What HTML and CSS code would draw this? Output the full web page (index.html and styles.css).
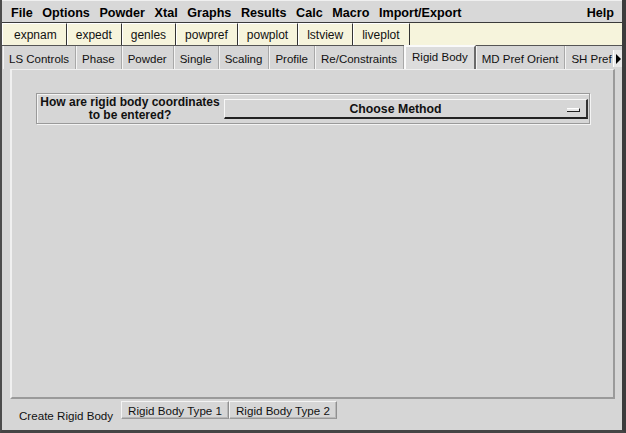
FILE: index.html
```html
<!DOCTYPE html>
<html>
<head>
<meta charset="utf-8">
<link rel="stylesheet" href="styles.css">
</head>
<body>
<div class="window">
  <div class="menubar">
    <span class="mi">File</span>
    <span class="mi">Options</span>
    <span class="mi">Powder</span>
    <span class="mi">Xtal</span>
    <span class="mi">Graphs</span>
    <span class="mi">Results</span>
    <span class="mi">Calc</span>
    <span class="mi">Macro</span>
    <span class="mi">Import/Export</span>
    <span class="mi help">Help</span>
  </div>
  <div class="toolbar">
    <span class="tb">expnam</span>
    <span class="tb">expedt</span>
    <span class="tb">genles</span>
    <span class="tb">powpref</span>
    <span class="tb">powplot</span>
    <span class="tb">lstview</span>
    <span class="tb">liveplot</span>
  </div>
  <div class="tabs">
    <span class="tab">LS Controls</span>
    <span class="tab">Phase</span>
    <span class="tab">Powder</span>
    <span class="tab">Single</span>
    <span class="tab">Scaling</span>
    <span class="tab">Profile</span>
    <span class="tab">Re/Constraints</span>
    <span class="tab active">Rigid Body</span>
    <span class="tab">MD Pref Orient</span>
    <span class="tab last">SH Pref</span>
    <span class="arrow"><svg width="6" height="10" viewBox="0 0 6 10"><path d="M1 0 L6 5 L1 10 Z" fill="#000"/></svg></span>
  </div>
  <div class="content">
    <div class="panel">
      <div class="frame">
        <div class="question">How are rigid body coordinates<br>to be entered?</div>
        <div class="menubtn">
          <span class="mlabel">Choose Method</span>
          <span class="indicator"></span>
        </div>
      </div>
    </div>
    <div class="subtabs">
      <span class="stab selected">Create Rigid Body</span>
      <span class="stab">Rigid Body Type 1</span>
      <span class="stab">Rigid Body Type 2</span>
    </div>
  </div>
</div>
</body>
</html>
```
FILE: styles.css
```css
html, body {
  margin: 0;
  padding: 0;
  background: #d6d6d6;
}
.window {
  width: 626px;
  height: 433px;
  box-sizing: border-box;
  border-left: 2px solid #4c4c4c;
  border-right: 4px solid #3c3c3c;
  border-bottom: 3px solid #454545;
  background: #d6d6d6;
  display: flex;
  flex-direction: column;
  font-family: "Liberation Sans", Arial, sans-serif;
  color: #000;
  white-space: nowrap;
  overflow: hidden;
}
.menubar {
  height: 23px;
  box-sizing: border-box;
  display: flex;
  align-items: center;
  padding: 3px 8px 0 9px;
  gap: 9.6px;
  font-weight: bold;
  font-size: 12.6px;
  border-top: 1px solid #f0f0f0;
  border-bottom: 1px solid #3a3a3a;
  background: #d8d8d8;
}
.mi.help {
  margin-left: auto;
}
.toolbar {
  height: 23px;
  box-sizing: border-box;
  display: flex;
  background: #f6f4dc;
  border-bottom: 1px solid #555;
  font-size: 12px;
}
.tb {
  display: flex;
  align-items: center;
  padding: 1px 9px 0 8px;
  border-left: 1px solid #fff;
  border-right: 1px solid #333;
  border-top: 1px solid #fff;
  color: #111;
}
.tb:first-child {
  padding-left: 11px;
}
.tabs {
  height: 23px;
  box-sizing: border-box;
  display: flex;
  align-items: stretch;
  font-size: 11.5px;
  padding-left: 1px;
}
.tab {
  flex-shrink: 0;
  display: flex;
  align-items: center;
  padding: 2px 6px 0 5px;
  border-right: 1px solid #a8a8a8;
  border-left: 1px solid #f4f4f4;
  color: #111;
}
.tab.active {
  background: #dcdcdc;
  border-left: 2px solid #fafafa;
  border-top: 2px solid #fafafa;
  border-right: 2px solid #6a6a6a;
  margin-top: -1px;
  padding: 0 6px 3px 6px;
}
.tab.last {
  border-right: none;
  padding-right: 1px;
}
.arrow {
  flex-shrink: 0;
  display: flex;
  align-items: center;
  padding: 0 1px 0 1px;
  background: #e8e8e8;
  border-left: 1px solid #fff;
  border-right: 1px solid #444;
  height: 17px;
  align-self: center;
  margin-top: 2px;
}
.content {
  flex: 1;
  display: flex;
  flex-direction: column;
  padding: 0 7px 0 8px;
}
.panel {
  flex: 1;
  border-left: 2px solid #f0f0f0;
  border-right: 2px solid #9a9a9a;
  border-bottom: 2px solid #9a9a9a;
  border-top: 1px solid #f0f0f0;
  padding: 23px 23px 0 24px;
}
.frame {
  display: flex;
  align-items: center;
  height: 31px;
  box-sizing: border-box;
  border: 1px solid #9a9a9a;
  box-shadow: inset 1px 1px 0 #f4f4f4, 1px 1px 0 #f4f4f4;
  padding: 0 1px 0 1px;
}
.question {
  width: 184px;
  text-align: center;
  font-weight: bold;
  font-size: 12px;
  line-height: 13px;
  color: #111;
  margin-top: 1px;
}
.menubtn {
  flex: 1;
  height: 20px;
  box-sizing: border-box;
  margin-left: 2px;
  padding-right: 20px;
  border-top: 1px solid #f8f8f8;
  border-left: 1px solid #f8f8f8;
  border-bottom: 2px solid #222;
  border-right: 2px solid #333;
  display: flex;
  align-items: center;
  justify-content: center;
  position: relative;
  font-weight: bold;
  font-size: 12.3px;
  color: #111;
}
.mlabel {
  margin-top: 1px;
}
.indicator {
  position: absolute;
  right: 6px;
  top: 8px;
  width: 12px;
  height: 2px;
  background: #e8e8e8;
  border-top: 1px solid #fff;
  border-right: 1px solid #222;
  border-bottom: 1px solid #222;
}
.subtabs {
  height: 29px;
  display: flex;
  align-items: flex-start;
  font-size: 11.6px;
  padding-top: 2px;
  padding-left: 3px;
}
.stab {
  height: 16px;
  display: flex;
  align-items: center;
  padding: 0 6px 0 6px;
  border: 1px solid #9a9a9a;
  border-right: 1px solid #909090;
  border-left: 1px solid #f4f4f4;
  border-top: 1px solid #f4f4f4;
  box-shadow: inset -1px -1px 0 #b8b8b8;
  color: #111;
}
.stab.selected {
  border: none;
  box-shadow: none;
  padding: 6px 8px 0 6px;
  height: 17px;
}
```
